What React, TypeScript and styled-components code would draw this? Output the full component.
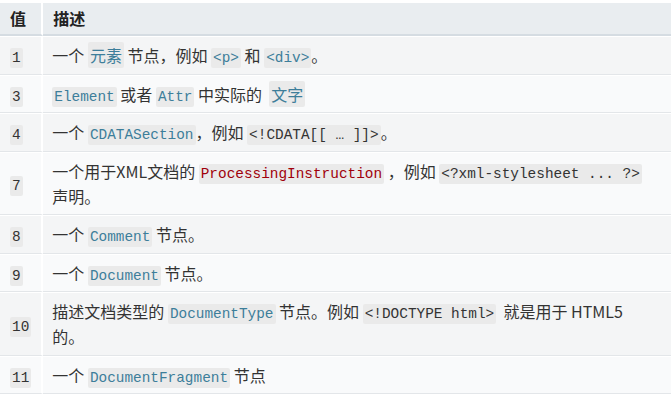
import React from "react";
import styled, { createGlobalStyle } from "styled-components";

/* css */
const GlobalStyle = createGlobalStyle`
  html, body {
    margin: 0;
    padding: 0;
    background: #ffffff;
  }
  body {
    padding-top: 3px;
    font-family: "Noto Sans CJK SC", "Noto Sans", sans-serif;
    color: #333333;
  }
`;

const Table = styled.table`
  width: 671px;
  border-collapse: separate;
  border-spacing: 0;
  font-size: 16px;
  line-height: 25px;
`;

const HeadCell = styled.th`
  background: #e9edf0;
  border-bottom: 2px solid #d5dce2;
  border-right: 2px solid #ffffff;
  padding: 3px 10px 3px 10px;
  text-align: left;
  font-weight: bold;
  color: #222;

  &:last-child {
    border-right: none;
  }
`;

const Row = styled.tr<{ $odd: boolean }>`
  background: ${(p) => (p.$odd ? "#f4f5f6" : "#f9fafb")};
`;

const NumCell = styled.td`
  width: 19px;
  padding: 6px 10px 5.5px 10px;
  border-top: 1px solid #ffffff;
  border-bottom: 1px solid #e3e6e9;
  border-right: 2px solid #ffffff;
  vertical-align: middle;
`;

const DescCell = styled.td`
  padding: 6px 10px 5.5px 9px;
  border-top: 1px solid #ffffff;
  border-bottom: 1px solid #e3e6e9;
  vertical-align: middle;
`;

const Code = styled.code<{ $tone?: "link" | "broken" | "plain" }>`
  font-family: "Liberation Mono", "DejaVu Sans Mono", monospace;
  font-size: 14.4px;
  line-height: 16px;
  background: #eaeaea;
  border-radius: 2px;
  padding: 2px 2px;
  color: ${(p) =>
    p.$tone === "link" ? "#3d7e9a" : p.$tone === "broken" ? "#a0000a" : "#333333"};
`;

const LinkText = styled.span`
  color: #3d7e9a;
  background: #eaeaea;
  border-radius: 2px;
  padding: 1px 2px;
`;
/* css */

interface NodeRow {
  value: string;
  desc: React.ReactNode;
}

const rows: NodeRow[] = [
  {
    value: "1",
    desc: (
      <>
        一个 <LinkText>元素</LinkText> 节点，例如 <Code $tone="link">&lt;p&gt;</Code> 和{" "}
        <Code $tone="link">&lt;div&gt;</Code>。
      </>
    ),
  },
  {
    value: "3",
    desc: (
      <>
        <Code $tone="link">Element</Code> 或者 <Code $tone="link">Attr</Code> 中实际的&nbsp;{" "}
        <LinkText>文字</LinkText>
      </>
    ),
  },
  {
    value: "4",
    desc: (
      <>
        一个 <Code $tone="link">CDATASection</Code>，例如 <Code>&lt;!CDATA[[ … ]]&gt;</Code>。
      </>
    ),
  },
  {
    value: "7",
    desc: (
      <>
        一个用于XML文档的 <Code $tone="broken">ProcessingInstruction</Code> ，例如{" "}
        <Code>&lt;?xml-stylesheet ... ?&gt;</Code> 声明。
      </>
    ),
  },
  {
    value: "8",
    desc: (
      <>
        一个 <Code $tone="link">Comment</Code> 节点。
      </>
    ),
  },
  {
    value: "9",
    desc: (
      <>
        一个 <Code $tone="link">Document</Code> 节点。
      </>
    ),
  },
  {
    value: "10",
    desc: (
      <>
        描述文档类型的 <Code $tone="link">DocumentType</Code> 节点。例如{" "}
        <Code>&lt;!DOCTYPE html&gt;</Code>&nbsp; 就是用于 HTML5
        <br />
        的。
      </>
    ),
  },
  {
    value: "11",
    desc: (
      <>
        一个 <Code $tone="link">DocumentFragment</Code> 节点
      </>
    ),
  },
];

function App() {
  return (
    <>
      <GlobalStyle />
      <Table>
        <thead>
          <tr>
            <HeadCell>值</HeadCell>
            <HeadCell>描述</HeadCell>
          </tr>
        </thead>
        <tbody>
          {rows.map((row, i) => (
            <Row key={row.value} $odd={i % 2 === 0}>
              <NumCell>
                <Code>{row.value}</Code>
              </NumCell>
              <DescCell>{row.desc}</DescCell>
            </Row>
          ))}
        </tbody>
      </Table>
    </>
  );
}

export default App;
